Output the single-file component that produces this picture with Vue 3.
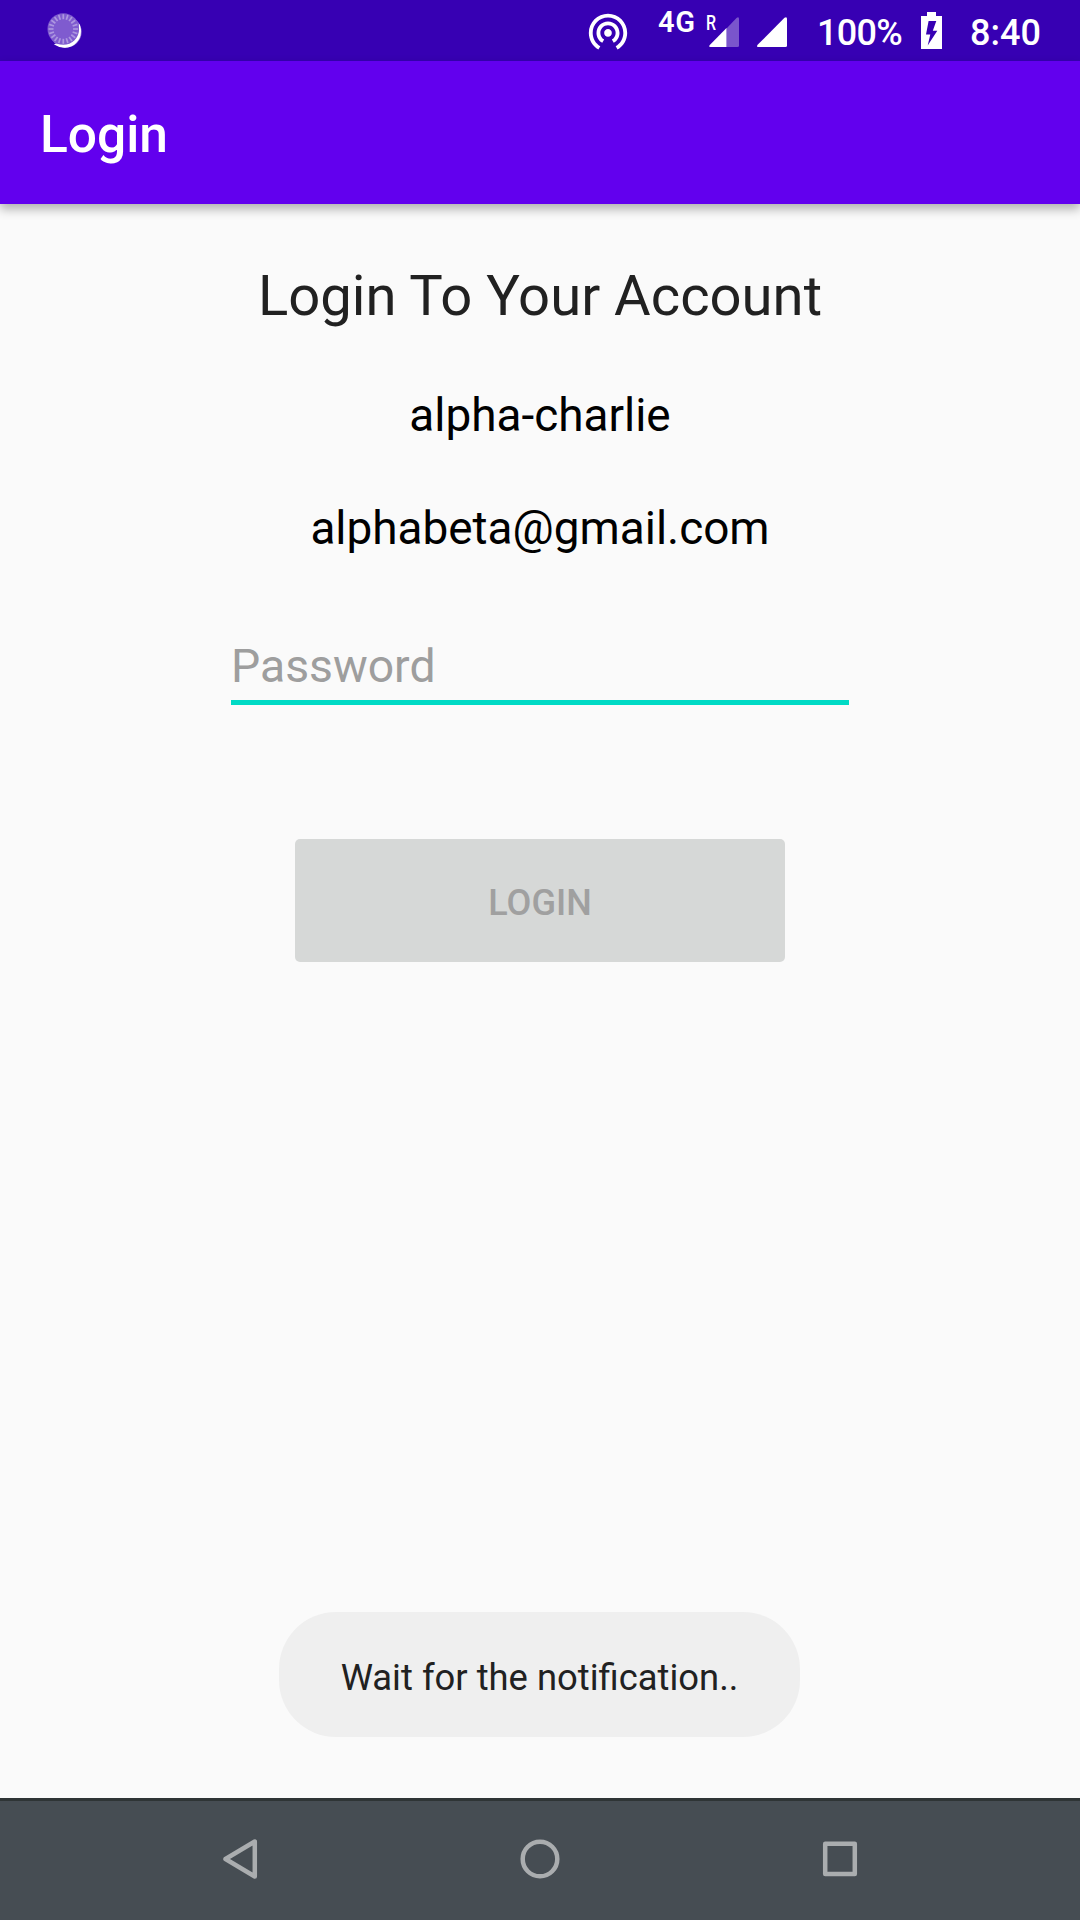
<script setup>
const ticks = Array.from({ length: 20 }, (_, i) => i * 18)
</script>

<template>
  <div class="screen">
    <header class="status">
      <svg class="spinner" width="40" height="40" viewBox="0 0 40 40">
        <circle cx="21.8" cy="21.8" r="15.8" fill="#9a80da" />
        <path d="M35.4 15.5A16 16 0 0 1 11.5 34.5Q29 33 35.4 15.5Z" fill="#fff" stroke="#fff" stroke-width="1.2" />
        <circle cx="19.3" cy="19" r="15.8" fill="#7f5bcf" />
        <path
          v-for="a in ticks"
          :key="a"
          d="M19.3 4.2V9.2"
          stroke="#ad97e0"
          stroke-width="1.7"
          :transform="`rotate(${a} 19.3 19)`"
        />
      </svg>
      <svg class="hotspot" width="46" height="46" viewBox="0 0 24 24" fill="#fff">
        <path d="M12 11c-1.1 0-2 .9-2 2s.9 2 2 2 2-.9 2-2-.9-2-2-2zm6 2c0-3.31-2.69-6-6-6s-6 2.69-6 6c0 2.22 1.21 4.15 3 5.19l1-1.74c-1.19-.7-2-1.97-2-3.45 0-2.21 1.79-4 4-4s4 1.79 4 4c0 1.48-.81 2.75-2 3.45l1 1.74c1.79-1.04 3-2.97 3-5.19zM12 3C6.48 3 2 7.48 2 13c0 3.7 2.01 6.92 4.99 8.65l1-1.73C5.61 18.53 4 15.96 4 13c0-4.42 3.58-8 8-8s8 3.58 8 8c0 2.96-1.61 5.53-4 6.92l1 1.73c2.99-1.73 5-4.95 5-8.65 0-5.52-4.48-10-10-10z" />
      </svg>
      <span class="net">4G</span>
      <span class="roam">R</span>
      <svg class="sig one" width="30" height="30" viewBox="0 0 30 30">
        <path d="M17.5 11.5L27.5 1Q30 -.8 30 2V28.500Q30 30 28.500 30H17.500Z" fill="#7a55cc" />
        <path d="M17.500 11V30H1.500Q-.8 30 .8 28Z" fill="#fff" />
      </svg>
      <svg class="sig two" width="30" height="30" viewBox="0 0 30 30">
        <path d="M.6 27.800L27.500 .8Q30 -.8 30 2V28.500Q30 30 28.500 30H1.500Q-.8 30 .6 27.800Z" fill="#fff" />
      </svg>
      <span class="pct">100%</span>
      <svg class="battery" width="21" height="37" viewBox="0 0 21 37">
        <path d="M0 4H6V0H15V4H21V37H0Z" fill="#fff" />
        <path d="M7.600 9H15.300L11.800 18.800H16.300L6.700 33.500L9.300 22.500H5Z" fill="#3700b3" />
      </svg>
      <span class="clock">8:40</span>
    </header>

    <div class="appbar"><span>Login</span></div>

    <main class="content">
      <h1>Login To Your Account</h1>
      <p class="user">alpha-charlie</p>
      <p class="mail">alphabeta@gmail.com</p>
      <div class="field">Password</div>
      <button class="login" disabled>LOGIN</button>
      <div class="toast">Wait for the notification..</div>
    </main>

    <nav class="nav">
      <svg width="40" height="44" viewBox="0 0 40 44"><path d="M5.500 22L34.800 4.500V39.500Z" /></svg>
      <svg width="44" height="44" viewBox="0 0 44 44"><circle cx="22" cy="22" r="17.300" /></svg>
      <svg width="40" height="44" viewBox="0 0 40 44"><rect x="5.200" y="6.700" width="29.600" height="30.300" /></svg>
    </nav>
  </div>
</template>

<style>
body {
  margin: 0;
}
</style>

<style scoped>
.screen {
  width: 1080px;
  height: 1920px;
  display: flex;
  flex-direction: column;
  overflow: hidden;
  background: #fafafa;
  font-family: Roboto, sans-serif;
}
.status {
  height: 61px;
  flex: none;
  display: flex;
  align-items: flex-start;
  background: #3700b3;
  color: #fff;
  font-weight: 500;
  white-space: nowrap;
}
.spinner {
  margin: 10px 0 0 44px;
}
.hotspot {
  margin: 8px 0 0 501px;
}
.net {
  width: 38px;
  margin: 6px 0 0 27px;
  font-size: 29px;
  line-height: 33px;
  font-weight: 600;
  letter-spacing: 0.8px;
}
.roam {
  width: 11px;
  margin: 12px 0 0 10px;
  font-size: 19.500px;
  line-height: 23px;
  transform: scaleX(0.82);
  transform-origin: left;
}
.sig {
  margin-top: 17px;
}
.one {
  margin-left: -8px;
}
.two {
  margin-left: 18px;
}
.pct {
  width: 86px;
  margin: 12px 0 0 30px;
  font-size: 36px;
  line-height: 42px;
  letter-spacing: -0.7px;
}
.battery {
  margin: 12px 0 0 18px;
}
.clock {
  margin: 12px 0 0 28px;
  font-size: 36px;
  line-height: 42px;
}
.appbar {
  height: 143px;
  flex: none;
  display: flex;
  align-items: center;
  box-sizing: border-box;
  padding: 3px 0 0 40px;
  background: #6200ee;
  color: #fff;
  font-size: 51.500px;
  font-weight: 500;
  box-shadow: 0 5px 10px rgba(0, 0, 0, 0.3);
  z-index: 1;
}
.content {
  flex: 1;
  display: flex;
  flex-direction: column;
  align-items: center;
}
h1 {
  margin: 59px 0 0;
  font-size: 56.200px;
  line-height: 66px;
  font-weight: 400;
  color: #212121;
}
.user,
.mail {
  margin: 59px 0 0;
  font-size: 45.900px;
  line-height: 54px;
  color: #000;
}
.field {
  box-sizing: border-box;
  width: 618px;
  height: 66px;
  margin-top: 84px;
  border-bottom: 5px solid #00dac5;
  font-size: 46.300px;
  line-height: 54px;
  color: #9e9e9e;
}
.login {
  width: 490px;
  height: 123px;
  margin-top: 134px;
  padding: 4px 0 0;
  border: 0;
  border-radius: 5px;
  background: #d6d8d7;
  color: #a0a0a0;
  font-family: inherit;
  font-size: 36px;
  font-weight: 500;
}
.toast {
  box-sizing: border-box;
  width: 521px;
  height: 125px;
  margin: auto 1px 61px 0;
  padding-top: 5px;
  border-radius: 57px;
  background: #efefef;
  color: #212121;
  font-size: 36.400px;
  line-height: 121px;
  text-align: center;
}
.nav {
  box-sizing: border-box;
  height: 122px;
  flex: none;
  display: flex;
  justify-content: space-between;
  align-items: flex-start;
  padding: 36px 220px 0;
  border-top: 3px solid #2e3435;
  background: #464d53;
}
.nav svg {
  fill: none;
  stroke: #aaadaf;
  stroke-width: 4.500;
  stroke-linejoin: round;
}
</style>
